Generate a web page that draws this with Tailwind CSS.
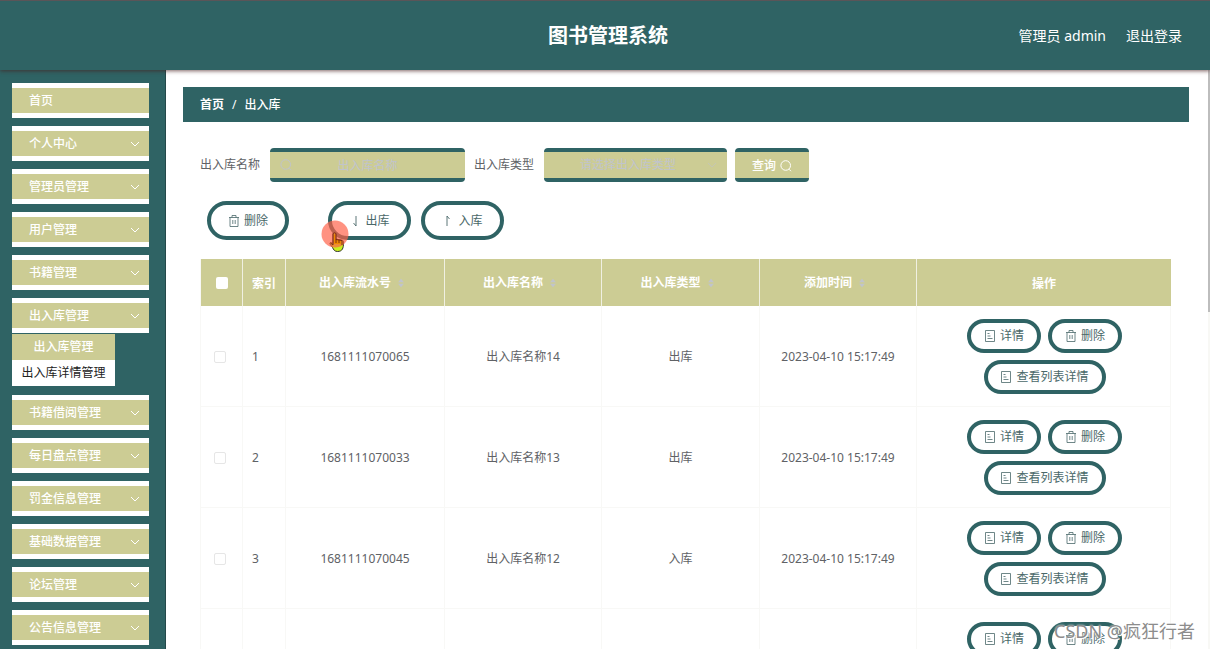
<!DOCTYPE html>
<html lang="zh-CN">
<head>
<meta charset="utf-8">
<meta name="viewport" content="width=device-width, initial-scale=1">
<title>图书管理系统</title>
<script src="https://cdn.jsdelivr.net/npm/@tailwindcss/browser@4"></script>
</head>
<body class="relative flex h-screen flex-col overflow-hidden bg-white font-['Noto_Sans','Noto_Sans_CJK_SC',sans-serif] text-xs text-[#606266]">
<svg class="hidden" aria-hidden="true">
  <symbol id="down" viewBox="0 0 10 10"><path d="M1 3l4 4 4-4" fill="none" stroke="currentColor"/></symbol>
  <symbol id="trash" viewBox="0 0 12 12"><path d="M1 2.5h10M4 2.5v-2h4v2M2 2.5v9h8v-9M4.8 5v4M7.2 5v4" fill="none" stroke="currentColor" stroke-width=".8"/></symbol>
  <symbol id="doc" viewBox="0 0 12 12"><path d="M1.5.5h9v11h-9zM3.5 3.5h2M3.500 6h3M3.5 8.500h5" fill="none" stroke="currentColor" stroke-width=".8"/></symbol>
  <symbol id="search" viewBox="0 0 12 12"><path d="M9 9.200l2 2M10.500 5.500a4.800 4.800 0 1 1-9.600 0a4.800 4.800 0 0 1 9.600 0z" fill="none" stroke="currentColor"/></symbol>
  <symbol id="sort" viewBox="0 0 8 12"><path d="M4 1l3.500 4h-7zM4 11l3.500-4h-7z" fill="currentColor"/></symbol>
</svg>

<header class="relative z-10 grid h-[70px] shrink-0 grid-cols-[1fr_auto_1fr] items-center border-t border-[#5a5558] bg-[#2f6364] pt-px text-white shadow-[0_1px_4px_rgba(70,30,30,0.7)]">
  <h1 class="col-start-2 pl-[6px] text-xl font-bold">图书管理系统</h1>
  <div class="flex justify-end gap-5 pr-7 text-sm">
    <span>管理员 admin</span>
    <a href="#">退出登录</a>
  </div>
</header>

<div class="flex min-h-0 flex-1">
  <nav class="w-[166px] shrink-0 overflow-hidden border-r border-[#24494a] bg-[#2f6364] pt-[13px] pr-4 pl-3">
    <ul class="flex flex-col gap-2 font-medium text-white">
      <li><button class="flex h-[35px] w-full items-center justify-between border-y-5 border-white bg-[#cccc94] pr-[9px] pl-[17px]">首页</button></li>
      <li><button class="flex h-[35px] w-full items-center justify-between border-y-5 border-white bg-[#cccc94] pr-[9px] pl-[17px]">个人中心<svg class="size-[10px]"><use href="#down"/></svg></button></li>
      <li><button class="flex h-[35px] w-full items-center justify-between border-y-5 border-white bg-[#cccc94] pr-[9px] pl-[17px]">管理员管理<svg class="size-[10px]"><use href="#down"/></svg></button></li>
      <li><button class="flex h-[35px] w-full items-center justify-between border-y-5 border-white bg-[#cccc94] pr-[9px] pl-[17px]">用户管理<svg class="size-[10px]"><use href="#down"/></svg></button></li>
      <li><button class="flex h-[35px] w-full items-center justify-between border-y-5 border-white bg-[#cccc94] pr-[9px] pl-[17px]">书籍管理<svg class="size-[10px]"><use href="#down"/></svg></button></li>
      <li class="pb-px"><button class="flex h-[35px] w-full items-center justify-between border-y-5 border-white bg-[#cccc94] pr-[9px] pl-[17px]">出入库管理<svg class="size-[10px]"><use href="#down"/></svg></button>
        <ul class="mt-px w-[103px] text-center leading-[26px]">
          <li><a href="#" class="block bg-[#cccc94]">出入库管理</a></li>
          <li><a href="#" class="block bg-white font-normal text-[#222]">出入库详情管理</a></li>
        </ul>
      </li>
      <li><button class="flex h-[35px] w-full items-center justify-between border-y-5 border-white bg-[#cccc94] pr-[9px] pl-[17px]">书籍借阅管理<svg class="size-[10px]"><use href="#down"/></svg></button></li>
      <li><button class="flex h-[35px] w-full items-center justify-between border-y-5 border-white bg-[#cccc94] pr-[9px] pl-[17px]">每日盘点管理<svg class="size-[10px]"><use href="#down"/></svg></button></li>
      <li><button class="flex h-[35px] w-full items-center justify-between border-y-5 border-white bg-[#cccc94] pr-[9px] pl-[17px]">罚金信息管理<svg class="size-[10px]"><use href="#down"/></svg></button></li>
      <li><button class="flex h-[35px] w-full items-center justify-between border-y-5 border-white bg-[#cccc94] pr-[9px] pl-[17px]">基础数据管理<svg class="size-[10px]"><use href="#down"/></svg></button></li>
      <li><button class="flex h-[35px] w-full items-center justify-between border-y-5 border-white bg-[#cccc94] pr-[9px] pl-[17px]">论坛管理<svg class="size-[10px]"><use href="#down"/></svg></button></li>
      <li><button class="flex h-[35px] w-full items-center justify-between border-y-5 border-white bg-[#cccc94] pr-[9px] pl-[17px]">公告信息管理<svg class="size-[10px]"><use href="#down"/></svg></button></li>
    </ul>
  </nav>

  <main class="min-w-0 flex-1 overflow-hidden pt-[17px] pr-[21px] pl-[17px]">
    <div class="flex h-[35px] items-center gap-2 bg-[#2f6364] px-[17px] text-white">
      <a href="#" class="font-bold">首页</a><span>/</span><span class="font-medium">出入库</span>
    </div>

    <div class="pt-[26px] pr-[18px] pl-[17px]">
      <form class="flex items-center">
        <label for="name" class="mr-[10px]">出入库名称</label>
        <div class="relative mr-[9px]">
          <svg class="absolute top-[11px] left-[10px] size-3 text-[#c0c4cc]"><use href="#search"/></svg>
          <input id="name" placeholder="出入库名称" class="block h-[34px] w-[195px] rounded border-y-4 border-[#2f6364] bg-[#cccc94] text-center placeholder:text-[#c0c4cc]">
        </div>
        <label for="type" class="mr-[10px]">出入库类型</label>
        <div class="relative mr-2">
          <select id="type" class="block h-[34px] w-[183px] appearance-none rounded border-y-4 border-[#2f6364] bg-[#cccc94] pr-[15px] text-center text-[#c0c4cc] [text-align-last:center]"><option>请选择出入库类型</option></select>
          <svg class="pointer-events-none absolute top-3 right-[10px] size-[10px] text-[#c4c6b4]"><use href="#down"/></svg>
        </div>
        <button type="button" class="flex h-[34px] w-[74px] items-center justify-center gap-1 rounded border-y-4 border-[#2f6364] bg-[#cccc94] pt-[2px] font-medium text-white">查询<svg class="size-3"><use href="#search"/></svg></button>
      </form>

      <div class="mt-[19px] mb-[19px] flex pl-[7px] text-[#4a6869]">
        <button class="mr-[39px] flex h-[39px] w-[82px] items-center justify-center gap-1 rounded-full border-4 border-[#2f6364]"><svg class="size-3"><use href="#trash"/></svg>删除</button>
        <button class="mr-[10px] flex h-[39px] w-[83px] items-center justify-center gap-1 rounded-full border-4 border-[#2f6364]"><svg class="size-3" viewBox="0 0 12 12"><path d="M7 1v10L4.500 8" fill="none" stroke="currentColor" stroke-width=".9"/></svg>出库</button>
        <button class="flex h-[39px] w-[83px] items-center justify-center gap-1 rounded-full border-4 border-[#2f6364]"><svg class="size-3" viewBox="0 0 12 12"><path d="M5 11V1l2.500 3" fill="none" stroke="currentColor" stroke-width=".9"/></svg>入库</button>
      </div>

      <table class="w-full table-fixed border-separate border-spacing-0 border-l border-[#f8f8f6]">
        <colgroup><col class="w-[42px]"><col class="w-[43px]"><col class="w-[159px]"><col class="w-[157px]"><col class="w-[158px]"><col class="w-[157px]"><col></colgroup>
        <thead>
          <tr class="h-[47px] bg-[#cccc94] text-white [&>th]:border-r [&>th]:border-[#f0f0e2] [&>th:last-child]:border-r-0">
            <th><input type="checkbox" aria-label="全选" class="mx-auto block size-3 appearance-none rounded-[2px] bg-white"></th>
            <th class="pt-[2px]">索引</th>
            <th class="pr-[6px]"><span class="inline-flex items-center gap-[6px]">出入库流水号<svg class="h-[10px] w-2 text-[#c0c4cc]"><use href="#sort"/></svg></span></th>
            <th class="pr-[6px]"><span class="inline-flex items-center gap-[6px]">出入库名称<svg class="h-[10px] w-2 text-[#c0c4cc]"><use href="#sort"/></svg></span></th>
            <th class="pr-[6px]"><span class="inline-flex items-center gap-[6px]">出入库类型<svg class="h-[10px] w-2 text-[#c0c4cc]"><use href="#sort"/></svg></span></th>
            <th class="pr-[6px]"><span class="inline-flex items-center gap-[6px]">添加时间<svg class="h-[10px] w-2 text-[#c0c4cc]"><use href="#sort"/></svg></span></th>
            <th class="pt-[2px]">操作</th>
          </tr>
        </thead>
        <tbody id="rows" class="text-center"></tbody>
      </table>
    </div>
  </main>
</div>

<template id="row">
  <tr class="h-[101px] [&>td]:border-r [&>td]:border-b [&>td]:border-[#f8f8f6]">
    <td class="pt-[2px] pr-[3px]"><input type="checkbox" aria-label="选择" class="mx-auto block size-3 appearance-none rounded-[2px] border border-[#e6e6e6] bg-white"></td>
    <td class="pt-[2px] pl-[9px] text-left"></td>
    <td class="pt-[2px]"></td>
    <td class="pt-[2px]"></td>
    <td class="pt-[2px]"></td>
    <td class="pt-[2px]"></td>
    <td>
      <div class="flex flex-wrap justify-center gap-[7px] pr-[46px] pl-12 text-[#4a6869]">
        <button class="flex h-[34px] w-[74px] items-center justify-center gap-1 rounded-full border-4 border-[#2f6364]"><svg class="size-3"><use href="#doc"/></svg>详情</button>
        <button class="flex h-[34px] w-[74px] items-center justify-center gap-1 rounded-full border-4 border-[#2f6364]"><svg class="size-3"><use href="#trash"/></svg>删除</button>
        <button class="flex h-[34px] w-[122px] items-center justify-center gap-1 rounded-full border-4 border-[#2f6364]"><svg class="size-3"><use href="#doc"/></svg>查看列表详情</button>
      </div>
    </td>
  </tr>
</template>
<script>
  const data = [
    ['1', '1681111070065', '出入库名称14', '出库', '2023-04-10 15:17:49'],
    ['2', '1681111070033', '出入库名称13', '出库', '2023-04-10 15:17:49'],
    ['3', '1681111070045', '出入库名称12', '入库', '2023-04-10 15:17:49'],
    ['', '', '', '', '']
  ];
  const body = document.getElementById('rows');
  for (const record of data) {
    const row = document.getElementById('row').content.cloneNode(true);
    const cells = row.querySelectorAll('td');
    record.forEach((value, i) => { cells[i + 1].textContent = value; });
    if (!record[0]) row.querySelector('input').remove();
    body.append(row);
  }
</script>

<!-- Scrollbar thumb over the right edge -->
<div class="absolute top-[70px] right-0 bottom-0 w-[2px] bg-[#f8f8f5]"><div class="h-[242px] bg-[#bdbdbd]"></div></div>

<!-- Pointer with click highlight -->
<svg class="pointer-events-none absolute top-[220px] left-[321px] h-8 w-7" viewBox="0 0 28 32">
  <path d="M12 14c0-2 3-2 3 0v5l5.500 1c2 .3 2 1 2 3 0 5-1 8.500-6 8.500-3 0-4-2-5-4l-2.500-3.500c-.5-1.500 1-2 3-.5z" fill="#c8f01e" stroke="#333"/>
  <circle cx="14" cy="14" r="13.500" fill="#ff5f45" fill-opacity=".68"/>
  <path d="M13 14.500h1.500V20H20v4h-7z" fill="#f08a00"/>
  <path d="M12 25V14c0-1.500 3-1.500 3 0v5.500l6 1V25M15 19v4M18 20v3M12 25l-2.500-2" fill="none" stroke="#7a2c10"/>
</svg>

<div class="pointer-events-none absolute right-[15px] bottom-1 text-lg text-[#8c8c8c] [text-shadow:0_0_2px_white,1px_1px_0_white]">CSDN @疯狂行者</div>
</body>
</html>
